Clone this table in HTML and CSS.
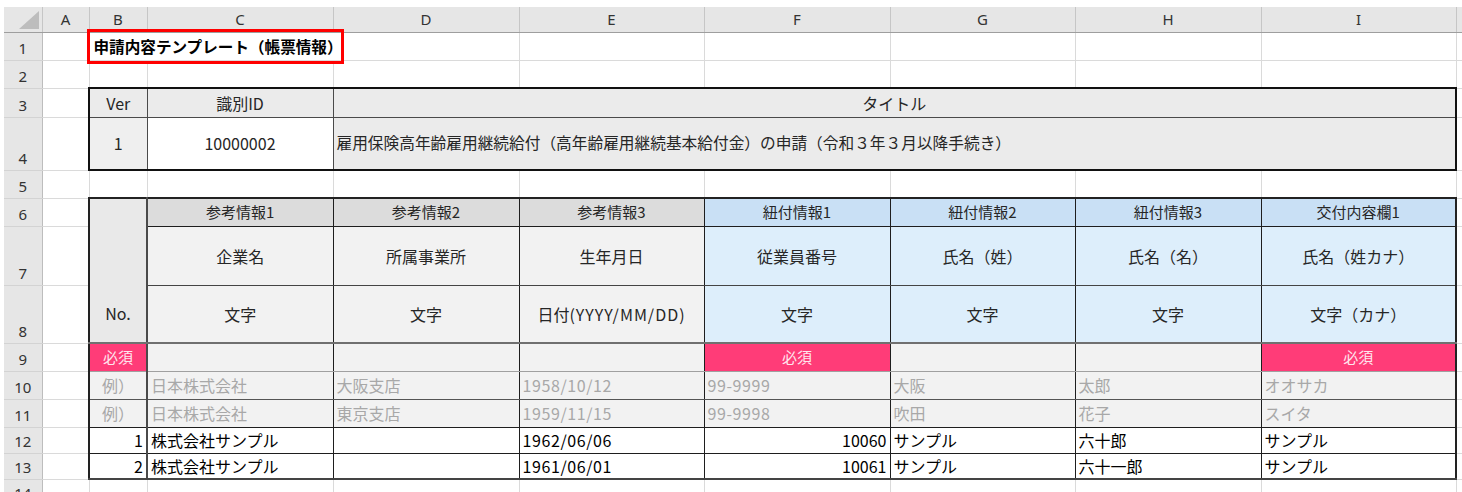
FILE: index.html
```html
<!DOCTYPE html>
<html lang="ja">
<head>
<meta charset="utf-8">
<title>申請内容テンプレート</title>
<link rel="stylesheet" href="styles.css">
</head>
<body>
<table class="sheet">
<colgroup>
<col class="w-rh"><col class="w-a"><col class="w-b"><col class="w-186"><col class="w-186"><col class="w-185"><col class="w-186"><col class="w-185"><col class="w-186"><col class="w-i"><col class="w-j">
</colgroup>
<tr class="h-hdr">
<th class="corner"><svg class="tri" width="20" height="18" viewBox="0 0 20 18"><polygon points="20,0 20,18 0,18" fill="#bdbdbd"/></svg></th>
<th class="ch">A</th><th class="ch">B</th><th class="ch">C</th><th class="ch">D</th><th class="ch">E</th><th class="ch">F</th><th class="ch">G</th><th class="ch">H</th><th class="ch">I</th><th class="ch"></th>
</tr>
<tr class="h28">
<th class="rh">1</th><td class="g"></td>
<td class="g title-cell" colspan="3"><span class="title">申請内容テンプレート（帳票情報）</span><span class="redbox"></span></td>
<td class="g"></td><td class="g"></td><td class="g"></td><td class="g"></td><td class="g"></td><td class="g"></td>
</tr>
<tr class="h28">
<th class="rh">2</th><td class="g"></td><td class="g"></td><td class="g"></td><td class="g"></td><td class="g"></td><td class="g"></td><td class="g"></td><td class="g"></td><td class="g"></td><td class="g"></td>
</tr>
<tr class="h29">
<th class="rh">3</th><td class="g"></td>
<td class="t1 t1-top t1-left grey c">Ver</td>
<td class="t1 t1-top grey c">識別ID</td>
<td class="t1 t1-top t1-right grey c" colspan="6">タイトル</td>
<td class="g"></td>
</tr>
<tr class="h53">
<th class="rh">4</th><td class="g"></td>
<td class="t1 t1-bottom t1-left grey2 c">1</td>
<td class="t1 t1-bottom white c">10000002</td>
<td class="t1 t1-bottom t1-right grey l long" colspan="6">雇用保険高年齢雇用継続給付（高年齢雇用継続基本給付金）の申請（令和３年３月以降手続き）</td>
<td class="g"></td>
</tr>
<tr class="h28">
<th class="rh">5</th><td class="g"></td><td class="g"></td><td class="g"></td><td class="g"></td><td class="g"></td><td class="g"></td><td class="g"></td><td class="g"></td><td class="g"></td><td class="g"></td>
</tr>
<tr class="h28">
<th class="rh">6</th><td class="g"></td>
<td class="t2 no" rowspan="3">No.</td>
<td class="t2 top ref-h c sm">参考情報1</td>
<td class="t2 top ref-h c sm">参考情報2</td>
<td class="t2 top ref-h c sm">参考情報3</td>
<td class="t2 top link-h c sm">紐付情報1</td>
<td class="t2 top link-h c sm">紐付情報2</td>
<td class="t2 top link-h c sm">紐付情報3</td>
<td class="t2 top right link-h c sm">交付内容欄1</td>
<td class="g"></td>
</tr>
<tr class="h59">
<th class="rh">7</th><td class="g"></td>
<td class="t2 r7 ref c">企業名</td>
<td class="t2 r7 ref c">所属事業所</td>
<td class="t2 r7 ref c">生年月日</td>
<td class="t2 r7 link c">従業員番号</td>
<td class="t2 r7 link c">氏名（姓）</td>
<td class="t2 r7 link c">氏名（名）</td>
<td class="t2 r7 right link c">氏名（姓カナ）</td>
<td class="g"></td>
</tr>
<tr class="h58">
<th class="rh">8</th><td class="g"></td>
<td class="t2 r8 ref c">文字</td>
<td class="t2 r8 ref c">文字</td>
<td class="t2 r8 ref c">日付<span class="wide">(YYYY/MM/DD)</span></td>
<td class="t2 r8 link c">文字</td>
<td class="t2 r8 link c">文字</td>
<td class="t2 r8 link c">文字</td>
<td class="t2 r8 right link c">文字（カナ）</td>
<td class="g"></td>
</tr>
<tr class="h28">
<th class="rh">9</th><td class="g"></td>
<td class="t2 r9 left bcol req c">必須</td>
<td class="t2 r9 ref"></td>
<td class="t2 r9 ref"></td>
<td class="t2 r9 ref"></td>
<td class="t2 r9 req c">必須</td>
<td class="t2 r9 ref"></td>
<td class="t2 r9 ref"></td>
<td class="t2 r9 right req c">必須</td>
<td class="g"></td>
</tr>
<tr class="h28">
<th class="rh">10</th><td class="g"></td>
<td class="t2 r10 left bcol ex c">例）</td>
<td class="t2 r10 ex">日本株式会社</td>
<td class="t2 r10 ex">大阪支店</td>
<td class="t2 r10 ex num">1958/10/12</td>
<td class="t2 r10 ex num">99-9999</td>
<td class="t2 r10 ex">大阪</td>
<td class="t2 r10 ex">太郎</td>
<td class="t2 r10 right ex">オオサカ</td>
<td class="g"></td>
</tr>
<tr class="h28">
<th class="rh">11</th><td class="g"></td>
<td class="t2 left bcol ex c">例）</td>
<td class="t2 ex">日本株式会社</td>
<td class="t2 ex">東京支店</td>
<td class="t2 ex num">1959/11/15</td>
<td class="t2 ex num">99-9998</td>
<td class="t2 ex">吹田</td>
<td class="t2 ex">花子</td>
<td class="t2 right ex">スイタ</td>
<td class="g"></td>
</tr>
<tr class="h26">
<th class="rh">12</th><td class="g"></td>
<td class="t2 left bcol dat r">1</td>
<td class="t2 dat">株式会社サンプル</td>
<td class="t2 dat"></td>
<td class="t2 dat num">1962/06/06</td>
<td class="t2 dat r">10060</td>
<td class="t2 dat">サンプル</td>
<td class="t2 dat">六十郎</td>
<td class="t2 right dat">サンプル</td>
<td class="g"></td>
</tr>
<tr class="h26">
<th class="rh">13</th><td class="g"></td>
<td class="t2 left bottom bcol dat r">2</td>
<td class="t2 bottom dat">株式会社サンプル</td>
<td class="t2 bottom dat"></td>
<td class="t2 bottom dat num">1961/06/01</td>
<td class="t2 bottom dat r">10061</td>
<td class="t2 bottom dat">サンプル</td>
<td class="t2 bottom dat">六十一郎</td>
<td class="t2 bottom right dat">サンプル</td>
<td class="g"></td>
</tr>
<tr class="h26">
<th class="rh">14</th><td class="g"></td><td class="g"></td><td class="g"></td><td class="g"></td><td class="g"></td><td class="g"></td><td class="g"></td><td class="g"></td><td class="g"></td><td class="g"></td>
</tr>
</table>
</body>
</html>
```
FILE: styles.css
```css
html, body {
  margin: 0;
  padding: 0;
  background: #ffffff;
}
body {
  width: 1462px;
  height: 492px;
  overflow: hidden;
  box-sizing: border-box;
  padding: 7px 0 0 4px;
  font-family: "Noto Sans CJK JP", "Noto Sans", sans-serif;
  font-size: 16px;
  color: #262626;
}
.sheet {
  border-collapse: collapse;
  table-layout: fixed;
  width: 1458px;
}
.w-rh { width: 38px; }
.w-a { width: 47px; }
.w-b { width: 58px; }
.w-186 { width: 186px; }
.w-185 { width: 185px; }
.w-i { width: 195px; }
.w-j { width: 6px; }

.h-hdr { height: 25px; }
.h26 { height: 26px; }
.h28 { height: 28px; }
.h29 { height: 29px; }
.h53 { height: 53px; }
.h58 { height: 58px; }
.h59 { height: 59px; }

.sheet th,
.sheet td {
  padding: 0 3px;
  white-space: nowrap;
  overflow: hidden;
  font-weight: normal;
  line-height: 20px;
  vertical-align: middle;
}

/* headers */
.corner {
  background: #e6e6e6;
  border-right: 1px solid #c6c6c6;
  border-bottom: 1px solid #9e9e9e;
  text-align: right;
  vertical-align: bottom !important;
  padding: 0 3px 3px 0 !important;
}
.tri { display: block; margin-left: auto; }
.ch {
  background: #e6e6e6;
  border-right: 1px solid #c6c6c6;
  border-bottom: 1px solid #9e9e9e;
  text-align: center;
  font-family: "Noto Sans", sans-serif;
  font-size: 15px;
  color: #333;
}
.rh {
  background: #e6e6e6;
  border-right: 1px solid #bdbdbd;
  border-bottom: 1px solid #d3d3d3;
  text-align: center;
  vertical-align: bottom !important;
  padding-bottom: 2px !important;
  font-family: "Noto Sans", sans-serif;
  font-size: 15px;
  color: #333;
}

/* plain gridline cells */
.g {
  border-right: 1px solid #dadada;
  border-bottom: 1px solid #dadada;
}

/* title */
.title-cell { position: relative; overflow: visible !important; }
.title {
  font-weight: 700;
  font-size: 15.6px;
  color: #000;
  padding-left: 1px;
}
.redbox {
  position: absolute;
  left: -3px;
  top: -4px;
  width: 257px;
  height: 35px;
  box-sizing: border-box;
  border: 3px solid #ff0000;
}

/* alignment */
.c { text-align: center; }
.l { text-align: left; }
.r { text-align: right; }

/* table 1 */
.t1 { border: 1px solid #4a4a4a; }
.t1-top { border-top: 2px solid #111; }
.t1-bottom { border-bottom: 2px solid #111; }
.t1-left { border-left: 2px solid #111; }
.t1-right { border-right: 2px solid #111; }
.grey { background: #ebebeb; }
.grey2 { background: #efefef; }
.white { background: #fff; }
.long { font-size: 15.7px; }

/* table 2 */
.t2 { border: 1px solid #1e1e1e; }
.t2.top { border-top: 2px solid #222; }
.t2.right { border-right: 2px solid #222; }
.t2.left { border-left: 2px solid #222; }
.t2.bottom { border-bottom: 2px solid #444; }
.bcol { border-right: 2px solid #4a4a4a; }
.no {
  background: #e9e9e9;
  border-left: 2px solid #222;
  border-top: 2px solid #222;
  border-right: 2px solid #4a4a4a;
  border-bottom: 2px solid #707070;
  text-align: center;
  vertical-align: bottom !important;
  padding-bottom: 19px !important;
}
.r7 { border-bottom: 1px solid #444; }
.r8 { border-bottom: 2px solid #707070; }
.r9 { border-bottom: 1px solid #a0a0a0; }
.r10 { border-bottom: 1px solid #555; }

.wide { letter-spacing: 1px; }
.num { letter-spacing: 0.6px; }

.sm { font-size: 15px; }
.ref-h { background: #dcdcdc; }
.link-h { background: #c9e0f5; }
.ref { background: #f2f2f2; }
.link { background: #ddeefb; }
.req { background: #ff3c78; color: #ffe6ee; font-size: 15px; }
.ex { background: #f2f2f2; color: #a8a8a8; }
.dat { background: #fff; color: #000; }
```
